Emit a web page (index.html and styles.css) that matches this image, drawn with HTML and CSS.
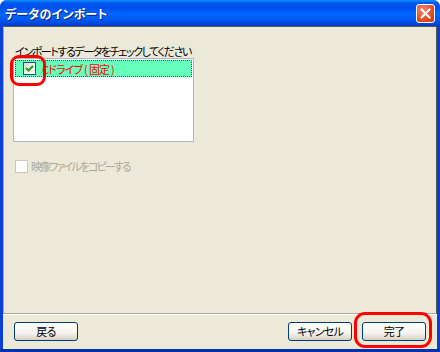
FILE: index.html
```html
<!DOCTYPE html>
<html lang="ja">
<head>
<meta charset="utf-8">
<link rel="stylesheet" href="styles.css">
</head>
<body>
<div class="window">
  <div class="titlebar">
    <span class="title">データのインポート</span>
    <span class="close"><svg width="11" height="11" viewBox="0 0 11 11"><path d="M1.5 1.5 L9.5 9.5 M9.5 1.5 L1.5 9.5" stroke="#fff" stroke-width="2" stroke-linecap="square"/></svg></span>
  </div>
  <div class="client">
    <div class="panel">
      <div class="label">インポートするデータをチェックしてください</div>
      <div class="listbox">
        <div class="row">
          <span class="cb checked"><svg width="9" height="9" viewBox="0 0 9 9"><path d="M1 4 L3.5 6.5 L8 2" stroke="#21a121" stroke-width="2" fill="none"/></svg></span>
          <span class="rowtext">Cドライブ<span class="paren">(</span>固定<span class="paren">)</span></span>
        </div>
        <span class="ring ring-check"></span>
      </div>
      <div class="option">
        <span class="cb disabled"></span>
        <span class="optext">映像ファイルをコピーする</span>
      </div>
    </div>
    <div class="footer">
      <button class="btn">戻る</button>
      <div class="spacer"></div>
      <button class="btn">キャンセル</button>
      <div class="btnwrap">
        <button class="btn">完了</button>
        <span class="ring ring-done"></span>
      </div>
    </div>
  </div>
</div>
</body>
</html>
```
FILE: styles.css
```css
html, body { margin: 0; padding: 0; }
body {
  width: 440px; height: 352px; overflow: hidden;
  font-family: "Noto Sans CJK JP", "Noto Sans", sans-serif;
  font-size: 11px;
  font-feature-settings: "palt";
  background: #ffffff;
}
.window {
  width: 440px; height: 352px;
  background: #0a3fd6;
  display: flex; flex-direction: column;
  border-radius: 7px 7px 0 0;
  box-sizing: border-box;
  border-bottom: 3px solid #0031b0;
}
.titlebar {
  height: 26px;
  flex: none;
  display: flex; align-items: center;
  padding: 0 5px 0 5px;
  border-radius: 7px 7px 0 0;
  background: linear-gradient(#0997ff 0px, #0053ee 3px, #0050ee 8px, #0066ff 14px, #0058f0 20px, #0045d8 24px, #003dd0 26px);
}
.title {
  color: #fff; font-weight: bold; font-size: 12px;
  letter-spacing: 0.2px;
  text-shadow: 1px 1px 0 #0a1f74;
  flex: 1;
}
.close {
  width: 19px; height: 19px;
  box-sizing: border-box;
  border: 1px solid #fff;
  border-radius: 3px;
  background: radial-gradient(circle at 35% 30%, #f08a6a, #e0502a 55%, #c8381a);
  display: flex; align-items: center; justify-content: center;
  margin-top: 1px;
}
.client {
  flex: 1;
  margin: 0 3px;
  background: #ece9d8;
  display: flex; flex-direction: column;
}
.panel {
  height: 288px;
  box-sizing: border-box;
  border-top: 1px solid #5a5850;
  border-right: 1px solid #5a5850;
  border-left: 1px solid #aca899;
  border-bottom: 1px solid #aca899;
  box-shadow: 0 1px 0 #fff;
  padding: 17px 0 0 9px;
  display: flex; flex-direction: column; align-items: flex-start;
}
.label {
  color: #000; line-height: 14px; letter-spacing: -1.4px;
  margin-left: 2px;
}
.listbox {
  position: relative;
  width: 181px; height: 84px;
  box-sizing: border-box;
  border: 1px solid #a5b8cf;
  background: #fff;
  padding: 1px;
}
.row {
  height: 17px;
  box-sizing: border-box;
  background: #66ffbb;
  border: 1px dotted #5a4a3a;
  display: flex; align-items: center;
  padding-left: 7px;
}
.cb {
  width: 13px; height: 13px;
  box-sizing: border-box;
  border: 1px solid #1c5180;
  background: linear-gradient(135deg, #dcdcd6, #fff);
  display: flex; align-items: center; justify-content: center;
  flex: none;
}
.rowtext {
  color: #ff0000; margin-left: 6px; line-height: 14px; letter-spacing: -0.9px;
}
.paren { margin: 0 2px; }
.ring {
  position: absolute;
  border: 3px solid #ff0000;
  border-radius: 9px;
  box-sizing: border-box;
  pointer-events: none;
}
.ring-check { left: -4px; top: -4px; width: 36px; height: 31px; }
.option {
  display: flex; align-items: center;
  margin-top: 17px; margin-left: 2px;
}
.cb.disabled { border-color: #cac8bb; background: #fff; }
.optext { color: #aca899; margin-left: 3px; letter-spacing: -1.9px; line-height: 14px; }
.footer {
  flex: 1;
  display: flex; align-items: flex-start;
  padding: 8px 11px 0 11px;
}
.spacer { flex: 1; }
.btn {
  font-family: inherit; font-size: 11px; font-feature-settings: "palt";
  letter-spacing: -0.8px;
  width: 64px; height: 19px;
  padding: 0; margin: 0;
  border: 1px solid #003c74;
  border-radius: 3px;
  background: linear-gradient(#ffffff, #f4f3ee 60%, #d6d0c5);
  color: #000;
  line-height: 15px;
}
.btnwrap { position: relative; margin-left: 10px; }
.ring-done { left: -8px; top: -10px; width: 78px; height: 36px; border-radius: 11px; }
```
